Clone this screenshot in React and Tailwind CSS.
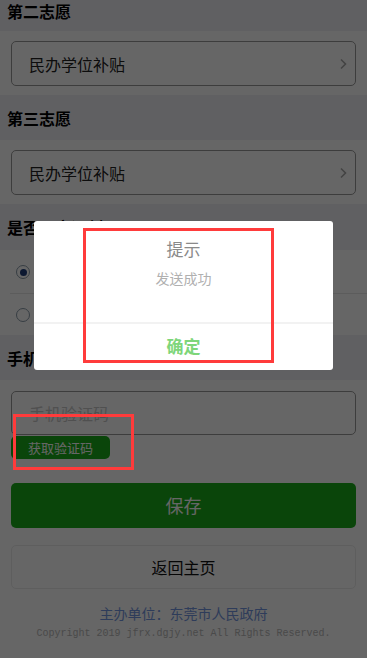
import React from 'react';

const cjk = { fontFamily: '"Noto Sans CJK SC", "Liberation Sans", sans-serif' };

function Label({ children, h, top = false }) {
  return (
    <div
      className={`bg-[#efeff4] px-[7px] flex ${top ? 'items-start' : 'items-center'}`}
      style={{ height: h }}
    >
      <span className="text-[16px] leading-[22px] font-bold text-black">{children}</span>
    </div>
  );
}

function Select({ value }) {
  return (
    <div className="bg-white px-[11px] pt-[10px] pb-[9px]">
      <div className="h-[45px] rounded-[5px] border border-[#9a9a9a] flex items-center justify-between pl-[17px] pr-[8px]">
        <span className="text-[16px] text-[#222]">{value}</span>
        <svg width="8" height="12" viewBox="0 0 8 12" fill="none">
          <path d="M2 1.5 L6.5 6 L2 10.5" stroke="#a8a8a8" strokeWidth="1.6" />
        </svg>
      </div>
    </div>
  );
}

function Radio({ checked }) {
  return (
    <div className="h-[42px] flex items-center pl-[16px]">
      <span className="w-[14px] h-[14px] rounded-full border border-[#8a9aa8] flex items-center justify-center bg-white">
        {checked && <span className="w-[7px] h-[7px] rounded-full bg-[#1f3d7a]" />}
      </span>
      <span className="ml-[4px] text-[15px] text-[#333]">{checked ? '是' : '否'}</span>
    </div>
  );
}

export default function App() {
  return (
    <div className="relative w-[367px] h-[658px] overflow-hidden bg-white" style={cjk}>
      <Label h={31} top>第二志愿</Label>
      <Select value="民办学位补贴" />
      <Label h={45}>第三志愿</Label>
      <Select value="民办学位补贴" />
      <Label h={46}>是否同意调剂</Label>
      <div className="bg-white h-[85px] pt-[1px]">
        <Radio checked />
        <div className="ml-[10px] border-t border-[#e5e5e5]" />
        <Radio />
      </div>
      <Label h={45}>手机验证码</Label>
      <div className="bg-white px-[11px] pt-[11px]">
        <div className="h-[44px] rounded-[5px] border border-[#9a9a9a] flex items-center pl-[17px]">
          <span className="text-[16px] text-[#c8c8c8]">手机验证码</span>
        </div>
        <div className="mt-[1px] w-[99px] h-[23px] rounded-[5px] bg-[#1aad19] flex items-center justify-center">
          <span className="text-[13px] text-white">获取验证码</span>
        </div>
        <div className="mt-[24px] h-[45px] rounded-[5px] bg-[#1aad19] flex items-center justify-center">
          <span className="text-[18px] text-white">保存</span>
        </div>
        <div className="mt-[17px] h-[44px] rounded-[5px] border border-[#ececec] flex items-center justify-center">
          <span className="text-[16px] text-[#111]">返回主页</span>
        </div>
        <div className="mt-[14px] text-center text-[14px] leading-[20px] text-[#7496e0]">主办单位：东莞市人民政府</div>
        <div
          className="mt-[4px] text-center text-[10px] leading-[14px] text-[#b8b8b8]"
          style={{ fontFamily: '"Liberation Mono", monospace' }}
        >
          Copyright 2019 jfrx.dgjy.net All Rights Reserved.
        </div>
      </div>

      {/* mask */}
      <div className="absolute inset-0 bg-black/60" />

      {/* dialog */}
      <div className="absolute left-[34px] top-[221px] w-[299px] h-[149px] bg-white rounded-[3px] flex flex-col">
        <div className="h-[101px] flex flex-col items-center pt-[16px]">
          <span className="text-[17px] leading-[24px] text-[#8a8a8a]">提示</span>
          <span className="mt-[7px] text-[14px] leading-[20px] text-[#b0b0b0]">发送成功</span>
        </div>
        <div className="h-[2px] bg-[#f2f2f2]" />
        <div className="flex-1 flex items-center justify-center pb-[2px]">
          <span className="text-[17px] font-bold text-[#7ed67a]">确定</span>
        </div>
      </div>

      {/* annotation boxes */}
      <div className="absolute left-[83px] top-[228px] w-[191px] h-[135px] border-[3px] border-[#ff3b3b]" />
      <div className="absolute left-[13px] top-[414px] w-[121px] h-[56px] border-[3px] border-[#ff3b3b]" />
    </div>
  );
}
